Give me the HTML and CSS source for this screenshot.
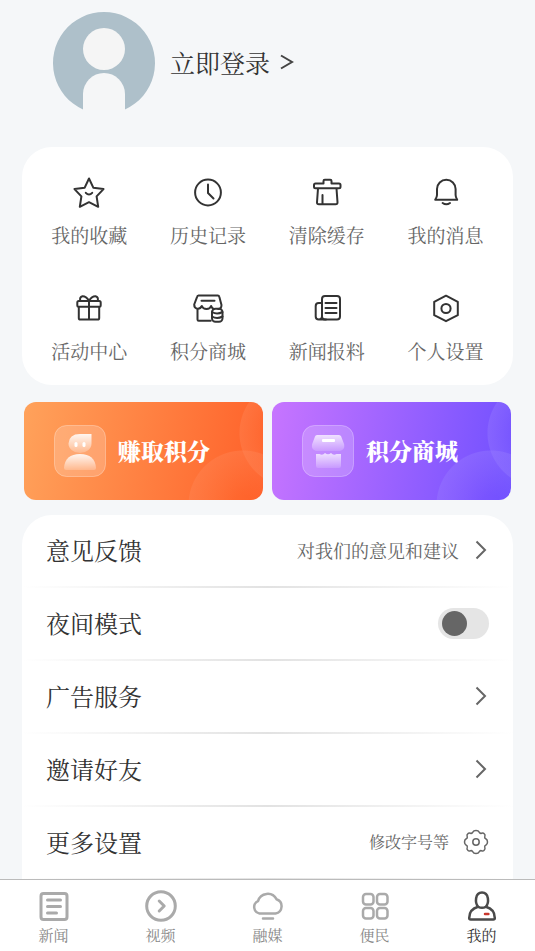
FILE: index.html
```html
<!DOCTYPE html>
<html lang="zh-CN">
<head>
<meta charset="utf-8">
<meta name="viewport" content="width=device-width, initial-scale=1">
<title>我的</title>
<link rel="stylesheet" href="styles.css">
</head>
<body>
<div class="app">
  <main class="page">
    <header class="profile">
      <svg class="avatar" viewBox="0 0 102 102" aria-hidden="true">
        <path d="M30 97.500a51 51 0 1 1 42 0z" fill="#aec0ca"/>
        <circle cx="51" cy="37" r="21" fill="#f5f5f5"/>
        <path d="M30 98V82a21 21 0 0 1 42 0v16z" fill="#f5f6f7"/>
      </svg>
      <a class="login" href="#">立即登录
        <svg class="login-arrow" viewBox="0 0 14 16" aria-hidden="true"><path d="M1 1.500L12 8 1 14.500"/></svg>
      </a>
    </header>

    <nav class="card shortcuts" aria-label="常用功能">
      <a class="shortcut" href="#">
        <svg class="icon" viewBox="0 0 32 32"><path d="M16 2.500L20.300 11.700 30.500 13.100 23.600 20.400 25.200 30.800 16 26.200 6.800 30.800 8.400 20.400 1.500 13.100 11.700 11.700z"/><path d="M12.800 16.800q3.200 3.600 6.400 0"/></svg>
        <span>我的收藏</span>
      </a>
      <a class="shortcut" href="#">
        <svg class="icon" viewBox="0 0 32 32"><circle cx="16" cy="16.500" r="12.900"/><path d="M16 8.500v8.500l5.500 5.500"/></svg>
        <span>历史记录</span>
      </a>
      <a class="shortcut" href="#">
        <svg class="icon" viewBox="0 0 32 32"><path d="M12.500 7.500V5q0-1.300 1.300-1.300h5.400q1.300 0 1.300 1.300v2.500h7.500q1.500 0 1.500 1.500v1.800q0 1.500-1.500 1.500H4.500Q3 12.300 3 10.800V9q0-1.500 1.500-1.500zM7 12.500L6 26.300q-.1 2 1.900 2h16.700q2 0 1.900-2L25.500 12.500M11.500 19v9"/></svg>
        <span>清除缓存</span>
      </a>
      <a class="shortcut" href="#">
        <svg class="icon" viewBox="0 0 32 32"><path d="M7 19v-6a9.300 9.300 0 0 1 18.600 0v6q0 2 1.600 4.800H5.200Q7 21 7 19zM12.600 27q3.700 2.600 7.400 0"/></svg>
        <span>我的消息</span>
      </a>
      <a class="shortcut" href="#">
        <svg class="icon" viewBox="0 0 32 32"><rect x="4.300" y="9" width="23.400" height="5.800" rx="1.500"/><path d="M5.800 15v11q0 1.600 1.600 1.600h17.200q1.600 0 1.600-1.600V15M16 9v18.600M16 8.800Q13 4 9.500 4.200 6.300 5 7.300 8.800M16 8.800Q19 4 22.500 4.200q3.200.8 2.200 4.600"/></svg>
        <span>活动中心</span>
      </a>
      <a class="shortcut" href="#">
        <svg class="icon" viewBox="0 0 32 32"><path d="M6.500 3.500h19.300q1.200 0 1.500 1.300L29.500 13c0 2.500-1 4-3.300 4M6.500 3.500Q5.500 3.500 5.100 4.800L2.200 12.500c0 5 5.600 5.600 7.600 1.500 1.500 4 8 4 9.300 0 .8 1.700 1.300 2.300 2 2.500M9.500 8.800h13M5.500 17v10.500q0 1.200 1.200 1.200h12"/><rect x="20" y="16.800" width="10.500" height="13" rx="3.500"/><path d="M20 20q5 3 10.500 0M20 24.500q5 3 10.500 0"/></svg>
        <span>积分商城</span>
      </a>
      <a class="shortcut" href="#">
        <svg class="icon" viewBox="0 0 32 32"><rect x="11" y="4" width="18" height="23.500" rx="3"/><path d="M11 11H7.700q-3 0-3 3v10.500a3.100 3 0 0 0 6.300 0M7 27.500h8M14.500 11h11M14.500 16h11M14.500 21h11"/></svg>
        <span>新闻报料</span>
      </a>
      <a class="shortcut" href="#">
        <svg class="icon" viewBox="0 0 32 32"><path d="M16 3.700L27.800 9.800v13.400L16 29.200 4.200 23.200V9.800z"/><circle cx="16" cy="16.500" r="4.600"/></svg>
        <span>个人设置</span>
      </a>
    </nav>

    <section class="banners">
      <a class="banner banner-earn" href="#">
        <svg class="badge" viewBox="0 0 52 52" aria-hidden="true">
          <defs>
            <linearGradient id="warm" x2="0" y2="1"><stop stop-color="#fff" stop-opacity=".9"/><stop offset="1" stop-color="#fff" stop-opacity=".2"/></linearGradient>
          </defs>
          <rect class="badge-tile" x=".5" y=".5" width="51" height="51" rx="12"/>
          <path d="M26 9h11.500v9.500a11.500 9.500 0 0 1-23 0Q15 9 26 9z" fill="url(#warm)"/>
          <rect x="20.500" y="17" width="3" height="5" rx="1.500" fill="#fff"/>
          <rect x="28.500" y="17" width="3" height="5" rx="1.500" fill="#fff"/>
          <path d="M10 43q1-14 16-14t16 14q0 2-2 2H12q-2 0-2-2z" fill="url(#warm)"/>
        </svg>
        <span>赚取积分</span>
      </a>
      <a class="banner banner-shop" href="#">
        <svg class="badge" viewBox="0 0 52 52" aria-hidden="true">
          <defs>
            <linearGradient id="cool" x2="0" y2="1"><stop stop-color="#fff" stop-opacity=".75"/><stop offset="1" stop-color="#fff" stop-opacity=".15"/></linearGradient>
          </defs>
          <rect class="badge-tile" x=".5" y=".5" width="51" height="51" rx="12"/>
          <path d="M15 10h22q1.600 0 2.200 1.500l3 8q.8 5-4 6.500H14q-4.800-1.500-4-6.500l3-8Q13.400 10 15 10z" fill="url(#cool)"/>
          <rect x="20" y="14" width="13" height="3" rx="1" fill="#fff"/>
          <path d="M14 29h3.500q3 2 5.500-1 3 2.500 6 0 2.500 3 5.500 1H39v12q0 2-2 2H16q-2 0-2-2z" fill="url(#cool)"/>
        </svg>
        <span>积分商城</span>
      </a>
    </section>

    <section class="card settings">
      <a class="row" href="#">
        <span class="row-title">意见反馈</span>
        <span class="row-hint">对我们的意见和建议</span>
        <svg class="chevron" viewBox="0 0 12 20" aria-hidden="true"><path d="M1.500 1.500L10 10l-8.500 8.500"/></svg>
      </a>
      <label class="row">
        <span class="row-title">夜间模式</span>
        <input class="switch" type="checkbox" role="switch">
      </label>
      <a class="row" href="#">
        <span class="row-title">广告服务</span>
        <svg class="chevron" viewBox="0 0 12 20" aria-hidden="true"><path d="M1.500 1.500L10 10l-8.500 8.500"/></svg>
      </a>
      <a class="row" href="#">
        <span class="row-title">邀请好友</span>
        <svg class="chevron" viewBox="0 0 12 20" aria-hidden="true"><path d="M1.500 1.500L10 10l-8.500 8.500"/></svg>
      </a>
      <a class="row row-more" href="#">
        <span class="row-title">更多设置</span>
        <span class="row-hint">修改字号等</span>
        <svg class="gear" viewBox="0 0 26 26" aria-hidden="true"><path d="M9.800 3.200Q10.500 1.500 13 1.500T16.200 3.200Q17 4.800 18.500 4.200 20.200 3.500 21.200 4.800 22.500 5.900 21.800 7.500 21.200 9 22.800 9.800 24.500 10.500 24.500 13T22.800 16.200Q21.200 17 21.800 18.500 22.500 20.200 21.200 21.200 20.100 22.500 18.500 21.800 17 21.200 16.200 22.800 15.500 24.500 13 24.500T9.800 22.800Q9 21.200 7.500 21.800 5.800 22.500 4.800 21.200 3.500 20.100 4.200 18.500 4.800 17 3.200 16.200 1.500 15.500 1.500 13T3.200 9.800Q4.800 9 4.200 7.500 3.500 5.800 4.800 4.800 5.900 3.500 7.500 4.200 9 4.800 9.800 3.200z"/><circle cx="13" cy="13" r="3.200"/></svg>
      </a>
    </section>
  </main>

  <nav class="tabs" aria-label="主导航">
    <a class="tab" href="#">
      <svg class="tab-icon" viewBox="0 0 34 34"><rect x="4" y="4.500" width="26" height="26" rx="2.500"/><path d="M10.500 11h13M10.500 17.500h13M10.500 24h9"/></svg>
      <span>新闻</span>
    </a>
    <a class="tab" href="#">
      <svg class="tab-icon" viewBox="0 0 34 34"><circle cx="17" cy="17" r="14.300"/><path d="M15.200 12l5 5-5 5"/></svg>
      <span>视频</span>
    </a>
    <a class="tab" href="#">
      <svg class="tab-icon tab-icon-thin" viewBox="0 0 34 34"><path d="M8.500 24.500a6.500 6.500 0 0 1-1.500-12.300 10 10 0 0 1 18.500-2A7.400 7.400 0 0 1 24.500 24.500zM12 29.500h10"/></svg>
      <span>融媒</span>
    </a>
    <a class="tab" href="#">
      <svg class="tab-icon tab-icon-thin" viewBox="0 0 34 34"><rect x="5" y="5" width="10.500" height="10.500" rx="3"/><rect x="19" y="5" width="10.500" height="10.500" rx="3"/><rect x="5" y="19" width="10.500" height="10.500" rx="3"/><rect x="19" y="19" width="10.500" height="10.500" rx="3"/></svg>
      <span>便民</span>
    </a>
    <a class="tab tab-active" href="#" aria-current="page">
      <svg class="tab-icon tab-icon-thin" viewBox="0 0 34 34"><path d="M13.200 17.800C9.800 14 9.800 3.500 17 3.500s7.200 10.500 3.800 14.300M13.200 17.800q3.800 2 7.600 0c5.500 1.500 9 5.200 9 11.200q0 1.500-1.500 1.500H5.700q-1.500 0-1.500-1.500c0-6 3.500-9.700 9-11.200z"/><path class="accent" d="M20 25h3.400"/></svg>
      <span>我的</span>
    </a>
  </nav>
</div>
</body>
</html>
```

FILE: styles.css
```css
* { box-sizing: border-box; }

body {
  margin: 0;
  background: #f5f7f9;
  color: #333;
  font-family: "Noto Serif CJK SC", "Noto Serif SC", "Source Han Serif SC", "Noto Sans CJK SC", serif;
}

a { color: inherit; text-decoration: none; }

svg { display: block; flex: none; }

.app {
  display: flex;
  flex-direction: column;
  height: 100vh;
}

.page {
  flex: 1;
  min-height: 0;
  overflow-y: auto;
  scrollbar-width: none;
  padding: 12px 22px 0;
}

.profile {
  display: flex;
  align-items: center;
  gap: 15px;
  padding: 0 31px 33px;
}

.avatar { width: 102px; height: 102px; }

.login {
  display: flex;
  align-items: center;
  gap: 10px;
  padding-bottom: 2px;
  font-size: 25px;
  line-height: 36px;
}

.login-arrow {
  width: 14px;
  height: 16px;
  fill: none;
  stroke: #444;
  stroke-width: 2;
}

.card {
  background: #fff;
  border-radius: 30px;
}

.shortcuts {
  display: grid;
  grid-template-columns: repeat(4, 1fr);
  row-gap: 43px;
  padding: 29px 8px 20px;
}

.shortcut {
  display: flex;
  flex-direction: column;
  align-items: center;
  gap: 13px;
  color: #666;
  font-size: 19px;
  line-height: 28px;
}

.icon {
  width: 32px;
  height: 32px;
  fill: none;
  stroke: #333;
  stroke-width: 2;
  stroke-linejoin: round;
  stroke-linecap: round;
}

.banners {
  display: grid;
  grid-template-columns: 1fr 1fr;
  gap: 9px;
  padding: 17px 2px 15px;
}

.banner {
  display: flex;
  align-items: center;
  gap: 12px;
  height: 98px;
  padding-left: 30px;
  border-radius: 12px;
  color: #fff;
  font-size: 23px;
  font-weight: 900;
  line-height: 32px;
}

.banner-earn {
  background:
    radial-gradient(circle at right -31px top 31px, #ff8a5c00 20px, #ff8a5c58 54px, #ff8a5c00 55px),
    radial-gradient(circle at right 20px top 103px, #ff8a5c00 10px, #ff8a5c58 54px, #ff8a5c00 55px),
    linear-gradient(100deg, #ffa25b, #ff6029);
}

.banner-shop {
  background:
    radial-gradient(circle at right -31px top 31px, #9a80ff00 20px, #9a80ff58 54px, #9a80ff00 55px),
    radial-gradient(circle at right 20px top 103px, #9a80ff00 10px, #9a80ff58 54px, #9a80ff00 55px),
    linear-gradient(100deg, #c775ff, #7050ff);
}

.badge { width: 52px; height: 52px; }

.badge-tile {
  fill: #fff;
  fill-opacity: .2;
  stroke: #fff;
  stroke-opacity: .3;
}

.settings {
  border-bottom-left-radius: 0;
  border-bottom-right-radius: 0;
}

.row {
  display: flex;
  align-items: center;
  gap: 16px;
  height: 73px;
  padding: 0 24px 3px;
  background: linear-gradient(90deg, #fff, #e2e2e2 50%, #fff) bottom / 100% 2px no-repeat;
}

.row:first-child { border-radius: 30px 30px 0 0; }

.row-title {
  flex: 1;
  font-size: 24px;
  line-height: 34px;
}

.row-hint {
  color: #666;
  font-size: 18px;
  line-height: 26px;
}

.row-more { gap: 14px; }

.row-more .row-hint { font-size: 16px; }

.chevron {
  width: 12px;
  height: 20px;
  margin-right: 2px;
  fill: none;
  stroke: #666;
  stroke-width: 2;
}

.gear {
  width: 26px;
  height: 26px;
  fill: none;
  stroke: #666;
  stroke-width: 1.500;
  stroke-linejoin: round;
}

.switch {
  appearance: none;
  width: 51px;
  height: 31px;
  margin: 0;
  padding: 3px 4px;
  border-radius: 16px;
  background: #e5e5e5;
}

.switch::before {
  content: "";
  display: block;
  width: 25px;
  height: 25px;
  border-radius: 50%;
  background: #666;
}

.switch:checked::before { margin-left: auto; }

.tabs {
  display: grid;
  grid-template-columns: repeat(5, 1fr);
  padding: 9px 0 5px;
  border-top: 1px solid #bbb;
  background: #fff;
}

.tab {
  display: flex;
  flex-direction: column;
  align-items: center;
  gap: 1px;
  color: #888;
  font-size: 15px;
  line-height: 22px;
}

.tab-icon {
  width: 34px;
  height: 34px;
  fill: none;
  stroke: #aaa;
  stroke-width: 3;
  stroke-linejoin: round;
  stroke-linecap: round;
}

.tab-icon-thin { stroke-width: 2.500; }

.tab-active { color: #333; }

.tab-active .tab-icon { stroke: #4a4a4a; }

.tab-active .accent { stroke: #c8372d; }
```
